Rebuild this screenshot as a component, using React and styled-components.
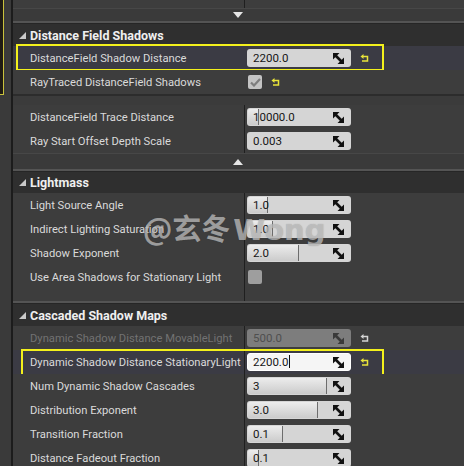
import React from 'react'
import styled, { createGlobalStyle } from 'styled-components'

const Global = createGlobalStyle`
  html, body { margin: 0; padding: 0; background: #3c3c3c; overflow: hidden; }
  body { font-family: Roboto, "Noto Sans", sans-serif; }
`

const Page = styled.div`
  position: relative;
  display: flex;
  width: 464px;
  height: 466px;
  overflow: hidden;
  background: #3c3c3c;
`

const Gutter = styled.div`
  width: 11px;
  flex: none;
  background: #3a3a3a;
  border-right: 2px solid #1c1c1c;
`

const GutterCorner = styled.div`
  width: 3px;
  height: 94px;
  background: #1f1b13;
  border-right: 1px solid #c9c23c;
  border-bottom: 1px solid #c9c23c;
`

const Panel = styled.div`
  flex: 1;
  display: flex;
  flex-direction: column;
  min-width: 0;
`

const Row = styled.div`
  position: relative;
  flex: none;
  display: grid;
  grid-template-columns: 231px 1fr;
  height: ${p => p.$h || 24}px;
  background: ${p => (p.$hover ? '#3b3b44' : '#3d3d3d')};
`

const Label = styled.div`
  display: flex;
  align-items: center;
  padding-left: 17px;
  font-size: 11.2px;
  color: ${p => (p.$disabled ? '#727272' : '#dadada')};
  white-space: nowrap;
  overflow: hidden;
`

const Value = styled.div`
  display: flex;
  align-items: center;
  padding-left: 2px;
  border-left: 1px solid ${p => (p.$noLine ? 'transparent' : '#1f1f1f')};
  gap: 9px;
`

const Highlight = styled.div`
  position: absolute;
  top: ${p => p.$top}px;
  bottom: ${p => p.$bottom}px;
  left: ${p => p.$left}px;
  width: ${p => p.$width}px;
  border: 2px solid #f3f01c;
  box-sizing: border-box;
  pointer-events: none;
`

const ExpandBar = styled.div`
  flex: none;
  height: ${p => p.$h}px;
  background: #3a3a3a;
  border-top: 1px solid #474747;
  box-sizing: border-box;
  display: flex;
  align-items: center;
  padding-left: 220px;
`

const Gap = styled.div`
  flex: none;
  height: 3px;
  background: #262626;
  border-top: 2px solid #545454;
  box-sizing: border-box;
`

const Header = styled.div`
  flex: none;
  height: ${p => p.$h || 21}px;
  background: #2f2f2f;
  display: flex;
  align-items: center;
  gap: 4px;
  padding-left: 6px;
  font-size: 12.5px;
  font-weight: 700;
  color: #efefef;
`

const Separator = styled.div`
  flex: none;
  height: 11px;
  background: #3b3b3b;
  border-top: 2px solid #2c2c2c;
  box-sizing: border-box;
`

const Spacer = styled.div`
  flex: none;
  height: ${p => p.$h}px;
  display: grid;
  grid-template-columns: 231px 1fr;
  background: #3d3d3d;
`

const Box = styled.div`
  position: relative;
  width: 104px;
  height: 18px;
  box-sizing: border-box;
  border-radius: 3px;
  overflow: hidden;
  background: ${p => (p.$disabled ? '#7d7d7d' : p.$focus ? '#f5f5f5' : '#d5d5d5')};
  border: 1px solid ${p => (p.$focus ? '#ffffff' : 'transparent')};
  display: flex;
  align-items: center;
`

const Fill = styled.div`
  position: absolute;
  left: 0;
  top: 0;
  bottom: 0;
  background: linear-gradient(#ececec, #cbcbcb);
  border-right: 1px solid #6d6d6d;
`

const BoxText = styled.span`
  position: relative;
  padding-left: 5px;
  font-size: 11.5px;
  color: ${p => (p.$disabled ? '#4f4f4f' : '#161616')};
`

const Caret = styled.span`
  display: inline-block;
  width: 1px;
  height: 13px;
  margin-left: 1px;
  vertical-align: -2px;
  background: #111;
`

const ArrowIcon = styled.svg`
  position: absolute;
  right: 6px;
  top: 3px;
`

const CheckBox = styled.div`
  width: 14px;
  height: 14px;
  margin-left: 1px;
  border-radius: 2px;
  background: ${p => (p.$checked ? '#c4c4c4' : '#9e9e9e')};
  display: flex;
  align-items: center;
  justify-content: center;
`

const Watermark = styled.div`
  position: absolute;
  left: 143px;
  top: 206px;
  font-family: "Noto Sans CJK SC", "Noto Sans", sans-serif;
  font-size: 29px;
  font-weight: 700;
  color: rgba(200, 200, 200, 0.7);
  text-shadow: 0 0 1px rgba(60, 60, 60, 0.35);
  pointer-events: none;
  white-space: nowrap;
`

const WatermarkLatin = styled.span`
  font-family: "DejaVu Sans", sans-serif;
  font-weight: 700;
  margin-left: 3px;
`

const Tri = ({ up }) => (
  <svg width="10" height="6" viewBox="0 0 10 6">
    <polygon points={up ? '5,0 10,6 0,6' : '0,0 10,0 5,6'} fill="#e6e6e6" />
  </svg>
)

const Caret3 = () => (
  <svg width="7" height="7" viewBox="0 0 7 7">
    <polygon points="7,0 7,7 0,7" fill="#c9c9c9" />
  </svg>
)

const Arrows = ({ color }) => (
  <ArrowIcon width="11" height="11" viewBox="0 0 11 11">
    <polygon points="0,0 6.5,0 0,6.5" fill={color} />
    <polygon points="11,11 4.5,11 11,4.5" fill={color} />
    <line x1="2" y1="2" x2="9" y2="9" stroke={color} strokeWidth="2.6" />
  </ArrowIcon>
)

const Reset = ({ color = '#e9e43a' }) => (
  <svg width="9" height="9" viewBox="0 0 9 9">
    <path d="M3 2.5 H7.5 V7 H2" fill="none" stroke={color} strokeWidth="1.5" />
    <polygon points="0.5,2.5 3.5,0 3.5,5" fill={color} />
  </svg>
)

const Check = () => (
  <svg width="11" height="9" viewBox="0 0 11 9">
    <path d="M1 4.5 L4 7.5 L10 1" fill="none" stroke="#7e7e7e" strokeWidth="2.2" />
  </svg>
)

const Spin = ({ value, fill, disabled, focus }) => (
  <Box $disabled={disabled} $focus={focus}>
    {fill != null && <Fill style={{ width: fill }} />}
    <BoxText $disabled={disabled}>
      {value}
      {focus && <Caret />}
    </BoxText>
    <Arrows color={disabled ? '#3a3a3a' : '#111'} />
  </Box>
)

const Prop = ({ label, value, fill, disabled, focus, reset, resetColor, check, hover, noLine, children }) => (
  <Row $hover={hover}>
    <Label $disabled={disabled}>{label}</Label>
    <Value $noLine={noLine}>
      {check != null ? (
        <CheckBox $checked={check}>{check && <Check />}</CheckBox>
      ) : (
        <Spin value={value} fill={fill} disabled={disabled} focus={focus} />
      )}
      {reset && <Reset color={resetColor} />}
    </Value>
    {children}
  </Row>
)

export default function App() {
  return (
    <Page>
      <Global />
      <Gutter>
        <GutterCorner />
      </Gutter>
      <Panel>
        <Spacer $h={8}>
          <div />
          <Value />
        </Spacer>
        <ExpandBar $h={13}>
          <Tri />
        </ExpandBar>
        <Gap />
        <Header $h={22}>
          <Caret3 />
          Distance Field Shadows
        </Header>
        <Prop label="DistanceField Shadow Distance" value="2200.0" reset hover noLine>
          <Highlight $top={-2} $bottom={-1} $left={3} $width={368} />
        </Prop>
        <Prop label="RayTraced DistanceField Shadows" check reset noLine />
        <Separator />
        <Prop label="DistanceField Trace Distance" value="10000.0" fill={10} />
        <Prop label="Ray Start Offset Depth Scale" value="0.003" />
        <ExpandBar $h={16}>
          <Tri up />
        </ExpandBar>
        <Gap />
        <Header>
          <Caret3 />
          Lightmass
        </Header>
        <Prop label="Light Source Angle" value="1.0" fill={19} />
        <Prop label="Indirect Lighting Saturation" value="1.0" fill={24} />
        <Prop label="Shadow Exponent" value="2.0" fill={50} />
        <Prop label="Use Area Shadows for Stationary Light" check={false} />
        <Spacer $h={12}>
          <div />
          <Value />
        </Spacer>
        <Gap />
        <Header $h={22}>
          <Caret3 />
          Cascaded Shadow Maps
        </Header>
        <Prop label="Dynamic Shadow Distance MovableLight" value="500.0" disabled reset resetColor="#d4d4d4" />
        <Prop label="Dynamic Shadow Distance StationaryLight" value="2200.0" focus reset hover>
          <Highlight $top={-1} $bottom={-3} $left={8} $width={363} />
        </Prop>
        <Prop label="Num Dynamic Shadow Cascades" value="3" fill={78} />
        <Prop label="Distribution Exponent" value="3.0" fill={69} />
        <Prop label="Transition Fraction" value="0.1" fill={34} />
        <Prop label="Distance Fadeout Fraction" value="0.1" fill={10} />
      </Panel>
      <Watermark>
        @玄冬<WatermarkLatin>Wong</WatermarkLatin>
      </Watermark>
    </Page>
  )
}
